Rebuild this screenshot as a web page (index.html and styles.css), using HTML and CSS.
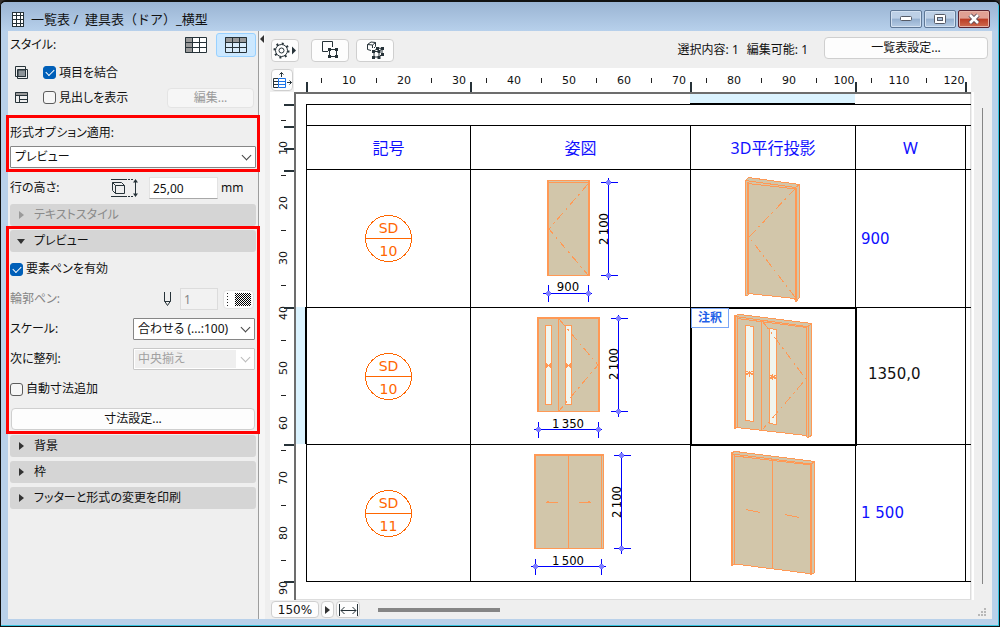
FILE: index.html
```html
<!DOCTYPE html>
<html lang="ja">
<head>
    <meta charset="UTF-8">
    <meta name="viewport" content="width=device-width, initial-scale=1.0">
    <title>一覧表 / 建具表（ドア）_横型</title>
    <link rel="stylesheet" href="styles.css">
</head>
<body>
<div class="window">
    <header class="titlebar">
        <svg class="title-icon" width="12" height="15" viewBox="0 0 12 15"><rect x=".5" y=".5" width="11" height="14" fill="#fff" stroke="#263238"/><path d="M4.5 0v15M8.5 0v15M0 3.5h12M0 7.5h12M0 11.5h12" stroke="#263238"/></svg>
        <h1>一覧表 /&nbsp; 建具表（ドア）_横型</h1>
        <div class="window-buttons">
            <button type="button" aria-label="最小化"><svg width="12" height="6" viewBox="0 0 12 6"><rect x=".5" y=".5" width="11" height="4" rx="1" fill="#fff" stroke="#555a66"/></svg></button>
            <button type="button" aria-label="最大化"><svg width="12" height="10" viewBox="0 0 12 10"><rect x=".5" y=".5" width="11" height="9" rx="1" fill="#fff" stroke="#555a66"/><rect x="3.500" y="3.500" width="5" height="3" fill="#a9c0dc" stroke="#555a66"/></svg></button>
            <button type="button" class="close" aria-label="閉じる"><svg width="14" height="12" viewBox="0 0 14 12"><path d="M3 2l8 8M11 2l-8 8" stroke="#5a4a55" stroke-width="4.500"/><path d="M3 2l8 8M11 2l-8 8" stroke="#fff" stroke-width="2.600"/></svg></button>
        </div>
    </header>

    <div class="body">
        <aside class="sidebar">
            <div class="row style-row">
                <span class="grow">スタイル:</span>
                <button type="button" class="style-btn" aria-label="縦型"><svg width="22" height="16" viewBox="0 0 22 16"><path d="M0 0h7v16H0z" fill="#999"/><path d="M7 0h15v16H7z" fill="#fff"/><path d="M.5.5h21v15H.5zM7.500 0v16M14.500 0v16M0 5.500h22M0 10.500h22" fill="none" stroke="#263238"/></svg></button>
                <button type="button" class="style-btn active" aria-label="横型"><svg width="22" height="16" viewBox="0 0 22 16"><path d="M0 0h22v5H0z" fill="#999"/><path d="M0 5h22v11H0z" fill="#d9ecfb"/><path d="M.5.5h21v15H.5zM7.500 0v16M14.500 0v16M0 5.500h22M0 10.500h22" fill="none" stroke="#263238"/></svg></button>
            </div>
            <div class="row option-row">
                <svg width="13" height="13" viewBox="0 0 13 13"><path d="M.5.5h10v10H.5z" fill="none" stroke="#263238"/><path d="M2.500 3.500h10v9h-10z" fill="none" stroke="#263238"/><path d="M3 4h7.500v6.500H3z" fill="#8d9499" stroke="#263238"/></svg>
                <label><input type="checkbox" checked>項目を結合</label>
            </div>
            <div class="row option-row">
                <svg width="13" height="11" viewBox="0 0 13 11"><path d="M0 0h13v4H0z" fill="#999"/><path d="M.5.5h12v10H.5zM0 3.500h13M4.500 4v7M5 7.500h8" fill="none" stroke="#263238"/></svg>
                <label class="grow"><input type="checkbox">見出しを表示</label>
                <button type="button" class="btn edit-btn" disabled>編集...</button>
            </div>

            <div class="callout format">
                <label class="field-label" for="format">形式オプション適用:</label>
                <div class="select"><select id="format"><option>プレビュー</option></select></div>
            </div>

            <div class="row height-row">
                <label class="grow" for="rowHeight">行の高さ:</label>
                <svg width="28" height="20" viewBox="0 0 28 20"><path d="M0 1.500h14M0 18.500h14" stroke="#263238"/><path d="M14 1.500h8M14 18.500h8" stroke="#263238" stroke-dasharray="2 1"/><path d="M1.500 4.500h9l3 3v8h-9l-3-3zM4.500 7.500h9M4.500 7.500v8M1.500 4.500l3 3" fill="none" stroke="#263238"/><path d="M24.500 2v16" stroke="#263238"/><path d="M22 4.500L24.500 1 27 4.500zM22 15.500l2.500 3.500 2.500-3.500z" fill="#263238"/></svg>
                <input type="text" class="num" id="rowHeight" value="25,00">
                <span class="unit">mm</span>
            </div>

            <button type="button" class="section" disabled><i class="arrow"></i>テキストスタイル</button>

            <div class="callout preview">
                <button type="button" class="section open"><i class="arrow"></i>プレビュー</button>
                <div class="row"><label><input type="checkbox" checked>要素ペンを有効</label></div>
                <div class="row pen-row">
                    <label class="grow dim" for="pen">輪郭ペン:</label>
                    <svg width="9" height="15" viewBox="0 0 9 15"><path d="M1.500 0v9l3 4.500 3-4.500V0M1.500 9.500h6" fill="none" stroke="#263238"/></svg>
                    <input type="text" class="num" id="pen" value="1" disabled>
                    <button type="button" class="btn pen-btn" aria-label="ペンカラー"><svg width="24" height="13" viewBox="0 0 24 13"><defs><pattern id="mesh" width="2" height="2" patternUnits="userSpaceOnUse"><path d="M0 0h1v1H0zM1 1h1v1H1z"/></pattern></defs><path d="M.5 0v13" stroke="#222" stroke-dasharray="1 2"/><rect x="8" width="16" height="13" fill="url(#mesh)"/></svg></button>
                </div>
                <div class="row">
                    <label class="grow" for="scale">スケール:</label>
                    <div class="select short"><select id="scale"><option>合わせる (...:100)</option></select></div>
                </div>
                <div class="row">
                    <label class="grow" for="align">次に整列:</label>
                    <div class="select short off"><select id="align" disabled><option>中央揃え</option></select></div>
                </div>
                <div class="row"><label><input type="checkbox">自動寸法追加</label></div>
                <button type="button" class="btn dim-btn">寸法設定...</button>
            </div>

            <button type="button" class="section after"><i class="arrow"></i>背景</button>
            <button type="button" class="section"><i class="arrow"></i>枠</button>
            <button type="button" class="section"><i class="arrow"></i>フッターと形式の変更を印刷</button>
        </aside>
        <div class="splitter"><i class="arrow"></i></div>

        <main class="main">
            <div class="toolbar">
                <button type="button" class="btn gear" aria-label="設定"><svg width="24" height="17" viewBox="0 0 24 17"><g fill="none" stroke="#263238"><circle cx="8.500" cy="8.500" r="6"/><circle cx="8.500" cy="8.500" r="2.500"/><circle cx="8.500" cy="8.500" r="7" stroke-width="2" stroke-dasharray="2 3.500"/></g><path d="M19 4.500l4 4-4 4z" fill="#263238"/></svg></button>
                <button type="button" class="btn tool" aria-label="平面で選択"><svg width="18" height="18" viewBox="0 0 18 18"><path d="M7 10.500H1.500v-10h10V6M8.500 8.500h7v7h-7z" fill="none" stroke="#263238"/><path d="M7 7h3v3H7zM14 7h3v3h-3zM7 14h3v3H7zM14 14h3v3h-3z" fill="#263238"/></svg></button>
                <button type="button" class="btn tool" aria-label="3Dで選択"><svg width="18" height="18" viewBox="0 0 18 18"><path d="M5 9.500L1.500 8.500v-5L5 1l4.500.5v4L8 7M1.500 3.500l5 .5L9.500 1.500M6.500 4v3M8 10l4-3 4 .5v5.500l-3 3H8zM8 10.500h5l3-3M13 10v6" fill="none" stroke="#263238"/><path d="M6 9h3v3H6zM6 15h3v3H6zM11.500 9h3v3h-3zM11.500 15h3v3h-3zM10 6h3v3h-3zM15 6h3v3h-3zM15 12h3v3h-3z" fill="#263238"/></svg></button>
                <p class="status"><span>選択内容: 1</span><span>編集可能: 1</span></p>
                <button type="button" class="btn settings">一覧表設定...</button>
            </div>

            <div class="corner">
                <button type="button" class="btn" aria-label="方向"><svg width="19" height="17" viewBox="0 0 19 17"><g fill="none"><path d="M5 6.500H.5v9H5M.5 9.500H5M.5 12.500H5" stroke="#263238"/><path d="M5.500 6.500h7v9h-7zM5.500 9.500h7M5.500 12.500h7" stroke="#1a73e8"/><path d="M8.500 5V.5M6.500 2.500l2-2 2 2M14 10.500h4.500M16.500 8.500l2 2-2 2" stroke="#263238"/></g></svg></button>
            </div>
            <div class="ruler ruler-x">
                <span>10</span><span>20</span><span>30</span><span>40</span><span>50</span><span>60</span><span>70</span><span>80</span><span>90</span><span>100</span><span>110</span><span>120</span>
                <div class="stops"><i></i><i></i><i></i><i></i><i></i></div>
            </div>
            <div class="ruler ruler-y">
                <span>10</span><span>20</span><span>30</span><span>40</span><span>50</span><span>60</span><span>70</span><span>80</span><span>90</span>
                <div class="stops"><i></i><i></i><i></i><i></i><i></i><i></i><i></i></div>
            </div>

            <div class="canvas">
                <div class="col-marks"><i></i></div>
                <div class="row-marks"><i></i></div>
                <table class="schedule">
                    <colgroup><col class="c-id"><col class="c-view"><col class="c-3d"><col class="c-w"><col></colgroup>
                    <thead>
                        <tr class="r-title"><td colspan="5"></td></tr>
                        <tr class="r-head"><th>記号</th><th>姿図</th><th>3D平行投影</th><th>W</th><td></td></tr>
                    </thead>
                    <tbody>
                        <tr class="first">
                            <td><svg class="tag" width="47" height="47" viewBox="0 0 47 47"><circle cx="23.500" cy="23.500" r="23"/><path d="M0 23.500h47"/><text x="23.500" y="18">SD</text><text x="23.500" y="41">10</text></svg></td>
                            <td><svg class="draw" width="219" height="136" viewBox="0 0 219 136">
                                <rect class="panel" x="76.500" y="9.500" width="42" height="95"/>
                                <path class="edge" d="M77.500 10v95M117.500 10v95M77 11.500h42"/>
                                <path class="swing" d="M117 13L78 58l39 46"/>
                                <path class="dimline" d="M137.500 7v102M130 11.500h17M130 104.500h17M72 122.500h49M77.500 114v17M117.500 114v17"/>
                                <g class="dot"><circle cx="137.500" cy="11.500" r="2.500"/><circle cx="137.500" cy="104.500" r="2.500"/><circle cx="77.500" cy="122.500" r="2.500"/><circle cx="117.500" cy="122.500" r="2.500"/></g>
                                <text x="97" y="120">900</text><text transform="translate(137 58) rotate(-90)">2&thinsp;100</text>
                            </svg></td>
                            <td><svg class="draw" width="164" height="136" viewBox="0 0 164 136">
                                <path class="panel" d="M54.500 9.500l3-3 51 7v113l-3.500 4-1.500-3-46-5-.5 2h-2.500z"/>
                                <path class="edge" d="M57.500 11v112M56.500 11v112M104.500 17v112M105.500 17v113M54.500 9.500l50 7 4-3M57 12.500l48 5.500"/>
                                <path class="swing" d="M104 18L58 66l46 60"/>
                            </svg></td>
                            <td class="w">900</td><td></td>
                        </tr>
                        <tr class="marked">
                            <td><svg class="tag" width="47" height="47" viewBox="0 0 47 47"><circle cx="23.500" cy="23.500" r="23"/><path d="M0 23.500h47"/><text x="23.500" y="18">SD</text><text x="23.500" y="41">10</text></svg></td>
                            <td><svg class="draw" width="219" height="136" viewBox="0 0 219 136">
                                <rect class="panel" x="66.500" y="9.500" width="62" height="94"/>
                                <path class="edge" d="M67.500 10v94M127.500 10v94M67 10.500h62M87.500 10v94"/>
                                <path class="glass" d="M74.500 17.500h6v79h-6zM94.500 17.500h6v79h-6z"/>
                                <path class="edge" d="M75 55.500l5 4M75 59.500l5-4M75 57.500h5M95 55.500l5 4M95 59.500l5-4M95 57.500h5"/>
                                <path class="swing" d="M88 11l39 46-39 46"/>
                                <path class="dimline" d="M147.500 7v102M140 10.500h17M140 103.500h17M63 121.500h68M67.500 114v16M127.500 114v16"/>
                                <g class="dot"><circle cx="147.500" cy="10.500" r="2.500"/><circle cx="147.500" cy="103.500" r="2.500"/><circle cx="67.500" cy="121.500" r="2.500"/><circle cx="127.500" cy="121.500" r="2.500"/></g>
                                <text x="97" y="120">1&thinsp;350</text><text transform="translate(147 56) rotate(-90)">2&thinsp;100</text>
                            </svg></td>
                            <td class="selected"><span class="note">注釈</span><svg class="draw" width="164" height="136" viewBox="0 0 164 136">
                                <path class="panel" d="M43.500 7.500l5-1 72 9v112l-4 2-1.500-2-69-8-2.500 1z"/>
                                <path class="edge" d="M44.500 8v112M46.500 9v110M115.500 19v109M117.500 18v111M44 8.500l72 10 4-2M46 10.500l70 9M70.500 13v109"/>
                                <path class="glass" d="M54.500 17.500l8 1v95l-8-1zM78.500 20.500l7 1v95l-7-1z"/>
                                <path class="edge" d="M55 63l7 4M55 67l7-4M55 65.500h7M58.500 63v6M79 67l6 4M79 71l6-4M79 69.500h6M81.500 66v6"/>
                                <path class="swing" d="M72 14l43 57-43 50"/>
                            </svg></td>
                            <td class="w editing">1350,0</td><td></td>
                        </tr>
                        <tr>
                            <td><svg class="tag" width="47" height="47" viewBox="0 0 47 47"><circle cx="23.500" cy="23.500" r="23"/><path d="M0 23.500h47"/><text x="23.500" y="18">SD</text><text x="23.500" y="41">11</text></svg></td>
                            <td><svg class="draw" width="219" height="136" viewBox="0 0 219 136">
                                <rect class="panel" x="63.500" y="9.500" width="69" height="94"/>
                                <path class="edge" d="M64.500 10v94M130.500 10v94M64 10.500h68M97.500 10v94M75 57.500h12M76 56.500h2M108 57.500h12M117 56.500h2"/>
                                <path class="dimline" d="M150.500 7v102M143 10.500h17M143 103.500h17M60 121.500h75M64.500 114v16M130.500 114v16"/>
                                <g class="dot"><circle cx="150.500" cy="10.500" r="2.500"/><circle cx="150.500" cy="103.500" r="2.500"/><circle cx="64.500" cy="121.500" r="2.500"/><circle cx="130.500" cy="121.500" r="2.500"/></g>
                                <text x="97" y="120">1&thinsp;500</text><text transform="translate(150 57) rotate(-90)">2&thinsp;100</text>
                            </svg></td>
                            <td><svg class="draw" width="164" height="136" viewBox="0 0 164 136">
                                <path class="panel" d="M40.500 7.500l4-1 79 10v111l-3 2-2.500-1-74-9.500-3 1z"/>
                                <path class="edge" d="M41.500 8v113M43.500 9v110M119.500 18v111M120.500 18v112M41 9l79 10 3.500-2.500M44 11l76 9M81.500 14v110M55 64.500l14 3M94 69.500l14 3"/>
                            </svg></td>
                            <td class="w">1 500</td><td></td>
                        </tr>
                    </tbody>
                </table>
            </div>
            <div class="vscroll"><i></i></div>

            <footer class="statusbar">
                <button type="button" class="btn zoom">150%</button>
                <button type="button" class="btn more" aria-label="ズーム"><i class="arrow"></i></button>
                <button type="button" class="btn fit" aria-label="幅に合わせる"><svg width="19" height="12" viewBox="0 0 19 12"><path d="M.5 0v12M18.500 0v12M2 6.500h15M5.500 3L2 6.500 5.500 10M13.500 3L17 6.500 13.500 10" fill="none" stroke="#263238"/></svg></button>
                <i class="hthumb"></i>
                <svg class="grip" width="8" height="8" viewBox="0 0 8 8"><path d="M6 0h2v2H6zM3 3h2v2H3zM6 3h2v2H6zM0 6h2v2H0zM3 6h2v2H3zM6 6h2v2H6z" fill="#b8b8b8"/></svg>
            </footer>
        </main>
    </div>
</div>
</body>
</html>
```

FILE: styles.css
```css
* {
    box-sizing: border-box;
}
body {
    margin: 0;
    background: #33302f;
    color: #111;
    font: 12px/16px "Noto Sans", "Noto Sans CJK JP", sans-serif;
}
button, input, select {
    font: inherit;
    color: inherit;
    margin: 0;
}
button {
    padding: 0;
}
svg {
    display: block;
    flex: none;
}

/* window frame */
.window {
    display: flex;
    flex-direction: column;
    height: 100vh;
    border: 1px solid #111;
    border-top-width: 2px;
    border-radius: 6px 6px 0 0;
    box-shadow: inset -1px -1px 0 #35c4e0;
    background: #b9d1ea;
    padding: 0 7px 7px;
    overflow: hidden;
}
.titlebar {
    display: flex;
    align-items: center;
    height: 29px;
    flex: none;
    margin: 0 -6px 0 -7px;
    padding: 5px 8px 0 11px;
    background: linear-gradient(#9ab4d3, #b7d0eb);
}
.titlebar h1 {
    flex: 1;
    margin: 0 0 0 7px;
    font-size: 13px;
    font-weight: normal;
}
.window-buttons {
    display: flex;
    gap: 2px;
}
.window-buttons button {
    display: grid;
    place-items: center;
    width: 32px;
    height: 18px;
    border: 1px solid #5f7896;
    border-radius: 2px;
    background: linear-gradient(#bdd0e6 45%, #94afcf 50%, #b5cbe4);
    box-shadow: inset 0 0 0 1px #d3e1f1;
}
.window-buttons .close {
    border-color: #5b2330;
    background: linear-gradient(#e0a094 45%, #bb3c25 50%, #cf6b50);
    box-shadow: inset 0 0 0 1px #e6b3a8;
}
.body {
    display: flex;
    flex: 1;
    min-height: 0;
    background: #efefef;
}

/* sidebar */
.sidebar {
    width: 250px;
    flex: none;
    padding: 2px 2px 0;
    font-feature-settings: "palt";
}
.row {
    display: flex;
    align-items: center;
    height: 30px;
}
.grow {
    flex: 1;
}
.dim {
    color: #858585;
}
.row label {
    display: flex;
    align-items: center;
    gap: 3px;
}
.sidebar .style-row {
    height: 24px;
    margin-bottom: 3px;
}
.sidebar .option-row {
    height: 25px;
    padding-left: 5px;
    padding-right: 2px;
    gap: 15px;
}
.style-btn {
    display: grid;
    place-items: center;
    width: 40px;
    height: 24px;
    border: 1px solid transparent;
    border-radius: 3px;
    background: none;
}
.style-btn.active {
    border-color: #99d1ff;
    background: #cce8ff;
}
input[type="checkbox"] {
    appearance: none;
    display: grid;
    justify-content: center;
    padding-top: 2px;
    width: 13px;
    height: 13px;
    border: 1px solid #5c5c5c;
    border-radius: 3px;
    background: #f6f6f6;
}
input[type="checkbox"]:checked {
    border-color: #005fb8;
    background: #005fb8;
}
input[type="checkbox"]:checked::after {
    content: "";
    width: 7px;
    height: 4px;
    border: solid #fff;
    border-width: 0 0 1px 1px;
    transform: rotate(-45deg);
}
.btn {
    display: flex;
    align-items: center;
    justify-content: center;
    border: 1px solid #cfcfcf;
    border-radius: 4px;
    background: #fdfdfd;
}
.btn:disabled {
    border-color: #e4e4e4;
    background: #f6f6f6;
    color: #9b9b9b;
}
.edit-btn {
    width: 87px;
    height: 20px;
}
.callout {
    position: relative;
    z-index: 1;
    outline: 3px solid #f00;
    outline-offset: 1px;
}
.format {
    margin-top: 9px;
}
.field-label {
    display: block;
    height: 27px;
    line-height: 27px;
}
.select {
    position: relative;
    height: 22px;
}
.select.short {
    width: 122px;
    margin-right: 1px;
}
.select select {
    appearance: none;
    width: 100%;
    height: 100%;
    padding: 0 4px;
    border: 1px solid #868686;
    border-radius: 1px;
    background: #fff;
    color: #111;
    opacity: 1;
}
.select::after {
    content: "";
    position: absolute;
    right: 6px;
    top: 6px;
    width: 6px;
    height: 6px;
    border: solid #444;
    border-width: 0 1px 1px 0;
    transform: rotate(45deg);
    pointer-events: none;
}
.select.off select {
    border-color: #c8c8c8;
    background: linear-gradient(#efefef, #efefef) no-repeat 1px 1px / 101px 18px #fff;
    color: #a0a0a0;
}
.select.off::after {
    border-color: #bbb;
}
.sidebar .height-row {
    height: 24px;
    margin: 8px 0 4px;
}
.num {
    width: 69px;
    height: 22px;
    padding: 0 3px;
    border: 1px solid #e3e3e3;
    border-bottom-color: #a8a8a8;
    background: #fff;
}
.height-row .num {
    margin: 0 3px 0 10px;
}
.unit {
    width: 35px;
}
.num:disabled {
    width: 38px;
    margin: 0 5px 0 8px;
    border-color: #dcdcdc;
    background: #f2f2f2;
    color: #858585;
}
.pen-btn {
    width: 31px;
    height: 19px;
    margin-right: 2px;
    border-color: #e2e2e2;
}
.section {
    display: flex;
    align-items: center;
    width: 100%;
    height: 22px;
    border: 0;
    border-radius: 3px;
    background: #d5d5d5;
    font-feature-settings: inherit;
}
.section + .section {
    margin-top: 4px;
}
.section:disabled {
    color: #8a8a8a;
}
.section.open {
    margin-bottom: 2px;
}
.arrow {
    flex: none;
    border: 4px solid transparent;
    border-left: 5px solid #333;
    border-right: 0;
}
.section .arrow {
    margin: 0 10px 0 9px;
}
.section:disabled .arrow {
    border-left-color: #9a9a9a;
}
.section.open .arrow {
    margin: 0 9px 0 7px;
    border: 4px solid transparent;
    border-top: 5px solid #333;
    border-bottom: 0;
}
.preview {
    margin-top: 4px;
}
.dim-btn {
    width: calc(100% - 2px);
    height: 22px;
    margin: 4px 1px 0;
}
.section.after {
    margin-top: 5px;
}
.splitter {
    width: 7px;
    flex: none;
    padding: 4px 0 0 1px;
    border-left: 1px solid #9d9d9d;
    background: #f6f6f6;
}
.splitter .arrow {
    display: block;
    width: 0;
    border-left: 0;
    border-right: 4px solid #333;
}

/* schedule view */
.main {
    display: grid;
    flex: 1;
    min-width: 0;
    padding-left: 5px;
    grid-template-columns: 24px 1fr 21px;
    grid-template-rows: 37px 24px 1fr 19px;
}
.toolbar {
    grid-column: 1 / -1;
    display: flex;
    align-items: center;
    padding: 1px 4px 0 1px;
}
.gear {
    width: 28px;
    height: 23px;
    margin-right: 12px;
}
.tool {
    width: 38px;
    height: 23px;
    margin-right: 7px;
}
.status {
    display: flex;
    flex: 1;
    justify-content: flex-end;
    gap: 8px;
    margin: 0 16px 0 0;
}
.settings {
    width: 164px;
    height: 22px;
    margin-bottom: 4px;
}
.corner {
    grid-column: 1;
    padding: 1px 1px 0;
}
.corner .btn {
    width: 22px;
    height: 22px;
}
.ruler {
    position: relative;
    display: flex;
    overflow: hidden;
    background: #fff;
    font: 11px/14px "DejaVu Sans", sans-serif;
}
.ruler span {
    display: flex;
    flex: none;
    align-items: center;
    justify-content: space-between;
}
.ruler span::before,
.ruler span::after {
    content: "";
}
.ruler span::before {
    background: #222;
}
.ruler-x {
    grid-column: 2;
    padding: 1px 0 0 27px;
}
.ruler-x span {
    width: 55px;
}
.ruler-x span::before {
    width: 1px;
    height: 5px;
}
.stops {
    position: absolute;
    display: flex;
}
.stops i {
    flex: none;
    border: 0 solid #263238;
}
.ruler-x .stops {
    left: 12px;
    bottom: 0;
}
.ruler-x .stops i {
    height: 10px;
    border-left-width: 2px;
}
.ruler-x .stops i:nth-child(1) { width: 164px; }
.ruler-x .stops i:nth-child(2) { width: 220px; }
.ruler-x .stops i:nth-child(3) { width: 165px; }
.ruler-x .stops i:nth-child(4) { width: 110px; }
.ruler-y {
    grid-column: 1;
    flex-direction: column;
    padding: 28px 0 0 4px;
}
.ruler-y span {
    height: 55px;
    width: 20px;
    writing-mode: vertical-rl;
    transform: rotate(180deg);
    flex-direction: row-reverse;
}
.ruler-y span::before {
    width: 5px;
    height: 1px;
}
.ruler-y .stops {
    flex-direction: column;
    top: 12px;
    right: 0;
}
.ruler-y .stops i {
    width: 10px;
    height: 137px;
    border-top-width: 2px;
}
.ruler-y .stops i:nth-child(-n+3) {
    height: 22px;
}
.canvas {
    grid-column: 2;
    display: grid;
    grid-template-columns: 10px 1fr;
    grid-template-rows: 10px 1fr;
    align-items: start;
    border: solid #6d6d6d;
    border-width: 2px 0 0 2px;
    box-shadow: inset -1px -1px 0 #ddd;
    background: #fff;
    overflow: hidden;
}
.col-marks {
    grid-column: 2;
    display: grid;
    grid-template-columns: 384px 165px;
    height: 10px;
}
.col-marks i {
    grid-column: 2;
    border-bottom: 1px solid #000;
    background: #dbf3ff;
}
.row-marks {
    display: grid;
    grid-template-rows: 203px 137px;
}
.row-marks i {
    grid-row: 2;
    border-right: 1px solid #000;
    background: #dbf3ff;
}
.schedule {
    width: 100%;
    table-layout: fixed;
    border-collapse: collapse;
    font-size: 16px;
    line-height: 20px;
}
.schedule td,
.schedule th {
    padding: 0;
    border: 1px solid #000;
    color: #1010ff;
    font-weight: normal;
}
.schedule td:last-child {
    border-right: 0;
}
.c-id { width: 164px; }
.c-view { width: 220px; }
.c-3d { width: 165px; }
.c-w { width: 110px; }
.r-title { height: 21px; }
.r-head { height: 44px; }
.schedule tbody tr { height: 137px; }
.schedule .first { height: 138px; }
.schedule td.w {
    padding-left: 5px;
    font: 15px/20px "DejaVu Sans", sans-serif;
}
.schedule td.editing {
    padding: 0 0 4px 12px;
    color: #111;
}
.selected {
    position: relative;
    outline: 2px solid #000;
    outline-offset: -1px;
}
.note {
    position: absolute;
    left: 0;
    top: 0;
    padding: 1px 6px;
    border: 1px solid #7ba7f7;
    background: #fff;
    color: #1f5fe8;
    font-size: 12px;
    line-height: 16px;
    font-weight: bold;
}
.tag {
    margin: 0 auto;
    font: 14px "DejaVu Sans", sans-serif;
    text-anchor: middle;
}
.tag circle,
.tag path {
    fill: none;
    stroke: #ff6600;
    shape-rendering: crispEdges;
}
.tag text {
    fill: #ff6600;
}
.draw {
    font: 13px "Liberation Sans Narrow", "DejaVu Sans Condensed", sans-serif;
    text-anchor: middle;
    shape-rendering: crispEdges;
}
.draw text {
    fill: #000;
}
.panel {
    fill: #d2c6aa;
    stroke: #ff9955;
}
.glass {
    fill: #f1f5ee;
    stroke: #ff9955;
}
.edge,
.swing {
    fill: none;
    stroke: #ff9955;
}
.swing {
    stroke-dasharray: 9 4 2 4;
}
.dimline {
    fill: none;
    stroke: #0000ff;
}
.dot {
    fill: #7f7fff;
}
.vscroll {
    grid-column: 3;
    padding: 16px 0 16px 8px;
    border-left: 2px solid #fff;
    margin-left: 1px;
}
.vscroll i {
    display: block;
    width: 1px;
    height: 100%;
    background: #858585;
}
.statusbar {
    grid-column: 1 / -1;
    display: flex;
    align-items: center;
    padding: 0 6px 0 1px;
}
.statusbar .btn {
    height: 17px;
}
.zoom {
    width: 48px;
    margin-right: 2px;
    font: 12px/14px "DejaVu Sans", sans-serif;
}
.more {
    width: 13px;
    margin-right: 2px;
}
.fit {
    width: 24px;
}
.hthumb {
    width: 122px;
    height: 4px;
    margin-left: 18px;
    background: #858585;
}
.grip {
    margin: 5px 0 0 auto;
}
```
